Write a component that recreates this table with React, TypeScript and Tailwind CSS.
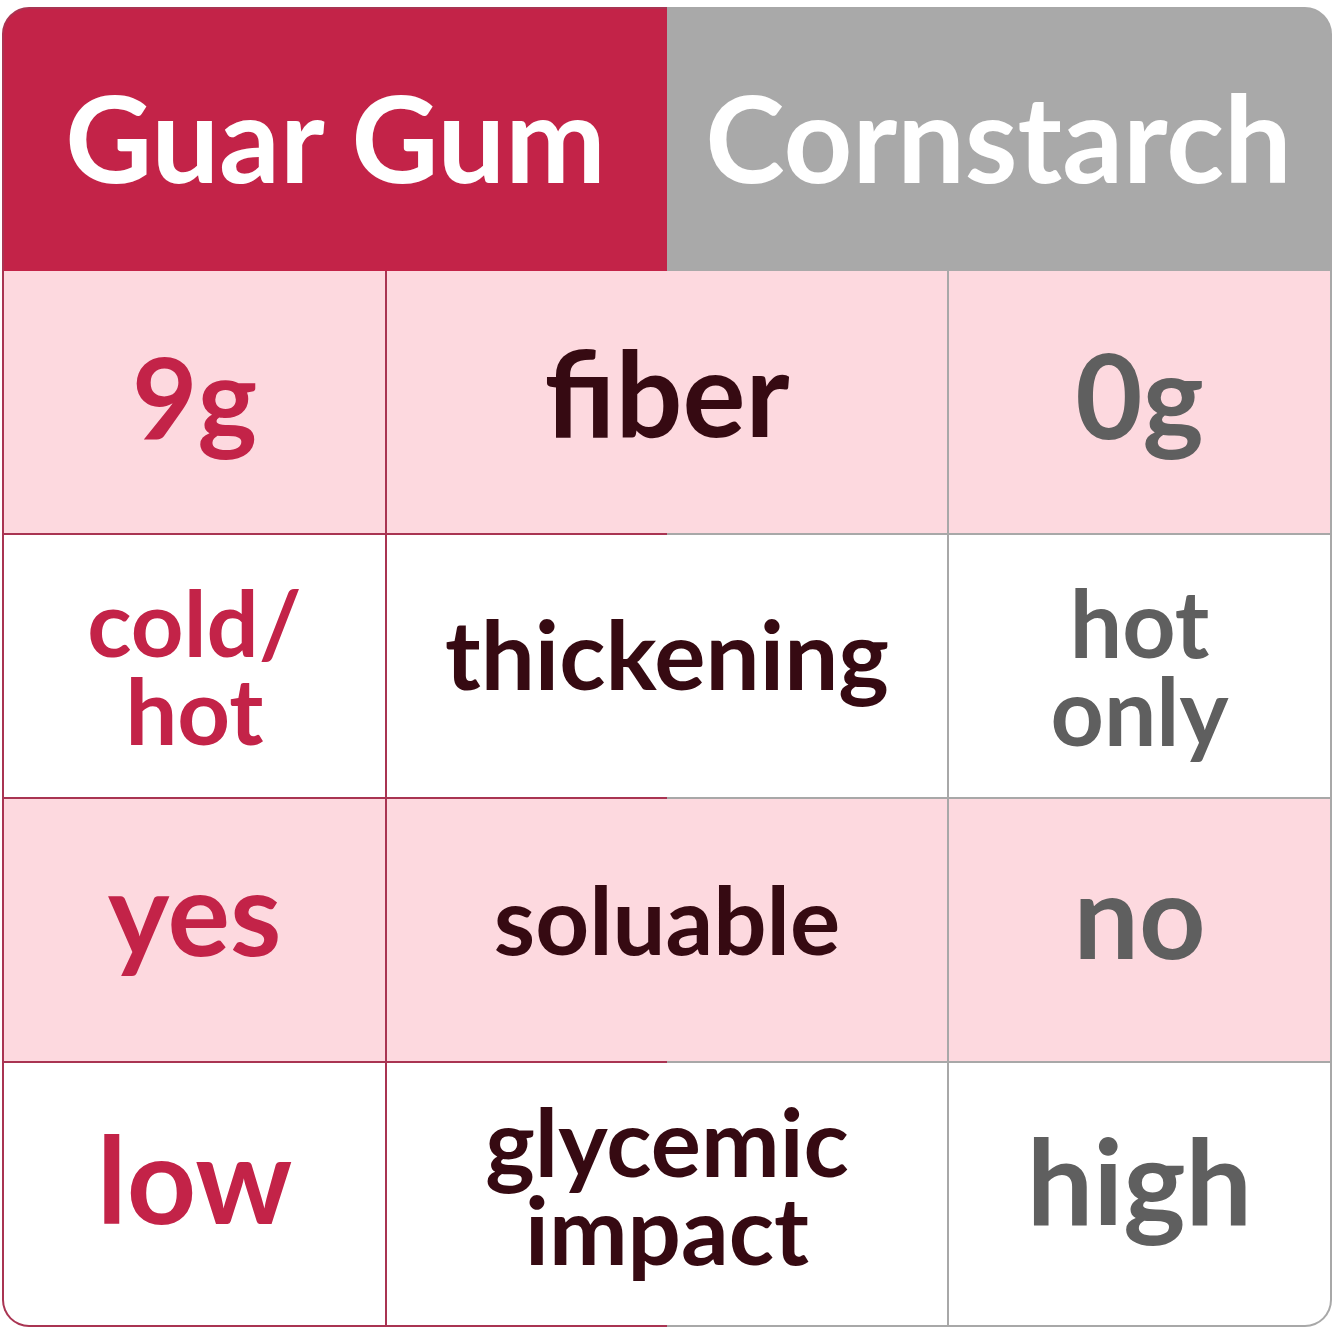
const rows = [
  {
    pink: true,
    left: { lines: ['9g'], cls: 'text-[113px] pb-[12px]' },
    mid: { lines: ['fiber'], cls: 'text-[118px] pb-[20px]' },
    right: { lines: ['0g'], cls: 'text-[116px] pb-[14px]' },
  },
  {
    pink: false,
    left: { lines: ['cold/', 'hot'], cls: 'text-[92px] leading-[88px]' },
    mid: { lines: ['thickening'], cls: 'text-[96px] pb-[26px]' },
    right: { lines: ['hot', 'only'], cls: 'text-[93px] leading-[88px]' },
  },
  {
    pink: true,
    left: { lines: ['yes'], cls: 'text-[117px] pb-[38px]' },
    mid: { lines: ['soluable'], cls: 'text-[94px] pb-[22px]' },
    right: { lines: ['no'], cls: 'text-[116px] pb-[30px]' },
  },
  {
    pink: false,
    left: { lines: ['low'], cls: 'text-[121px] pb-[32px]' },
    mid: { lines: ['glycemic', 'impact'], cls: 'text-[94px] leading-[88px] pb-[18px]' },
    right: { lines: ['high'], cls: 'text-[118px] pb-[28px]' },
  },
]

function Divider() {
  return <div className="h-[2px] bg-[linear-gradient(to_right,#a93452_50%,#a8a8a8_50%)]" />
}

function Cell({ lines, cls, className }: { lines: string[]; cls: string; className: string }) {
  return (
    <div className={`flex flex-col items-center justify-center font-bold leading-[1.05] ${cls} ${className}`}>
      {lines.map((l) => (
        <span key={l} className="whitespace-nowrap">{l}</span>
      ))}
    </div>
  )
}

export default function App() {
  return (
    <div className="w-[1334px] h-[1334px] bg-white pt-[7px] pl-[2px]" style={{ fontFamily: 'Lato, "Noto Sans", sans-serif' }}>
      <div className="w-[1330px] rounded-[27px] p-[2px] bg-[linear-gradient(to_right,#a93452_50%,#a8a8a8_50%)]">
        <div className="rounded-[25px] overflow-hidden">
          <div className="flex h-[262px] text-white font-bold text-[120px] leading-none">
            <div className="flex-1 bg-[#c32348] flex items-center justify-center pb-[6px]">Guar Gum</div>
            <div className="flex-1 bg-[#a9a9a9] flex items-center justify-center pb-[6px]">Cornstarch</div>
          </div>
          {rows.map((r, i) => (
            <div key={i}>
              {i > 0 && <Divider />}
              <div className={`flex h-[262px] ${r.pink ? 'bg-[#fdd9df]' : 'bg-white'}`}>
                <Cell {...r.left} className="w-[383px] border-r-2 border-[#a93452] text-[#c32348]" />
                <Cell {...r.mid} className="w-[562px] border-r-2 border-[#a8a8a8] text-[#360a12]" />
                <Cell {...r.right} className="flex-1 text-[#5f5f5f]" />
              </div>
            </div>
          ))}
        </div>
      </div>
    </div>
  )
}
